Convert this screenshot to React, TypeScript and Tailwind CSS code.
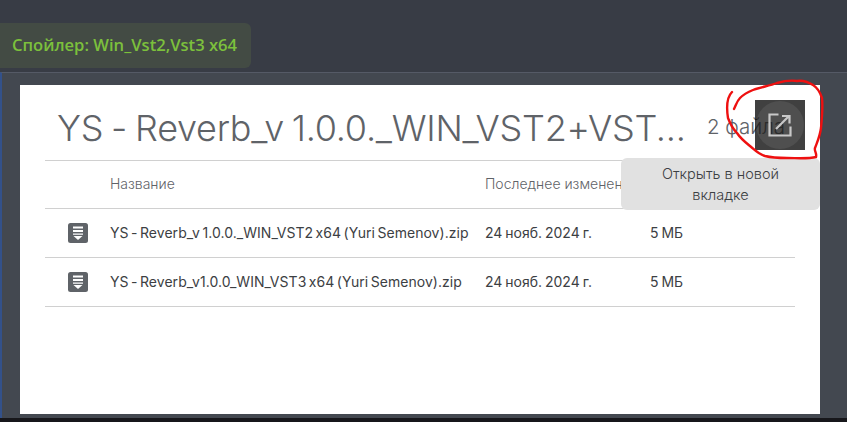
const fileRows = [
  { name: "YS - Reverb_v 1.0.0._WIN_VST2 x64 (Yuri Semenov).zip", date: "24 нояб. 2024 г.", size: "5 МБ" },
  { name: "YS - Reverb_v1.0.0_WIN_VST3 x64 (Yuri Semenov).zip", date: "24 нояб. 2024 г.", size: "5 МБ" },
];

function ZipIcon() {
  return (
    <svg width="20" height="20" viewBox="0 0 20 20" className="block shrink-0">
      <rect width="20" height="20" rx="2.5" fill="#5f6368" />
      <path d="M5 3.5h10v2H5zM5 7h10v2H5zM5 10.5h10v1.3H5zM5.5 13h9L10 17z" fill="#fff" />
    </svg>
  );
}

export default function App() {
  return (
    <div className="relative h-[422px] w-[847px] overflow-hidden bg-[#383c45] flex flex-col font-['Inter',sans-serif] [font-feature-settings:'calt'_0]">
      <div className="h-[23px] shrink-0" />
      <div className="h-[45px] w-[251px] shrink-0 rounded-r-md bg-[#434b44] pl-3 flex items-center text-[16.6px] font-semibold text-[#7cc03c] font-['Open_Sans',sans-serif] whitespace-nowrap">
        Спойлер: Win_Vst2,Vst3 x64
      </div>
      <div className="h-1 shrink-0" />
      <div className="h-[346px] shrink-0 border-t border-t-[#555a66] border-l-2 border-l-[#33518a] bg-[#434850] pt-3 pl-[18px] pr-[27px] flex flex-col">
        <div className="relative h-[329px] w-[800px] bg-white px-[25px]">
          <div className="h-[75px] flex items-center text-[#5f6368] pt-[10px]">
            <span className="ml-3 text-[36px] font-light leading-none tracking-[-0.25px] [word-spacing:-2px] whitespace-nowrap w-[650px]">
              YS - Reverb_v 1.0.0._WIN_VST2+VST...
            </span>
            <span className="text-[20.5px] font-light whitespace-nowrap">2 файла</span>
          </div>
          <div className="h-[48px] border-t border-[#d0d0d0] flex items-center text-[14px] font-light text-[#5f6368]">
            <span className="ml-[65px] w-[375px] pb-0.5">Название</span>
            <span className="whitespace-nowrap pb-0.5">Последнее изменение</span>
          </div>
          {fileRows.map((row) => (
            <div key={row.name} className="h-[49px] border-t border-[#d0d0d0] flex items-center text-[14px] text-[#3c4043] whitespace-nowrap">
              <span className="ml-[23px] mr-[22px]"><ZipIcon /></span>
              <span className="w-[375px] pb-0.5 tracking-[0.04px] [word-spacing:-1.5px]">{row.name}</span>
              <span className="w-[165px] pb-0.5 [word-spacing:-1px]">{row.date}</span>
              <span className="pb-0.5 [word-spacing:-1px]">{row.size}</span>
            </div>
          ))}
          <div className="border-t border-[#d0d0d0]" />

          <div className="absolute left-[735px] top-[15px] h-[50px] w-[50px] bg-black/75 flex items-center justify-center">
            <div className="h-[48px] w-[48px] rounded-full bg-white/8 flex items-center justify-center">
              <svg width="24" height="24" viewBox="0 0 24 24" fill="none" stroke="#c8c8c8" strokeWidth="2.2">
                <path d="M10.5 1.5H1.5v21h21V13.5" />
                <path d="M8 16 20.5 3.5M14 3h7.5v7.5" />
              </svg>
            </div>
          </div>
          <div className="absolute left-[601px] top-[73px] h-[52px] w-[199px] rounded-md bg-[#e1e1e1] text-[14.5px] font-light leading-[21px] text-[#3c4043] text-center flex items-center justify-center px-6">
            Открыть в новой вкладке
          </div>
        </div>
      </div>
      <div className="flex-1 bg-[#17171b]" />
      <svg className="absolute left-0 top-0 pointer-events-none" width="847" height="422" fill="none">
        <path d="M732 92C727 97 726 105 728 118C731 126 733 129 737 133C741 139 745 142 750 146C755 150 758 154 765 156C773 158 780 158 787 158C797 158 808 159 816 157C817 153 814 151 815 148C818 140 820 136 821 128C822 118 823 108 822 98C820 92 818 88 813 85C808 82 802 80 797 81C790 80 784 81 777 83C769 86 761 87 753 90C748 92 744 94 740 98C737 101 736 105 734 109" stroke="#ee1010" strokeWidth="2.4" strokeLinecap="round" />
      </svg>
    </div>
  );
}
